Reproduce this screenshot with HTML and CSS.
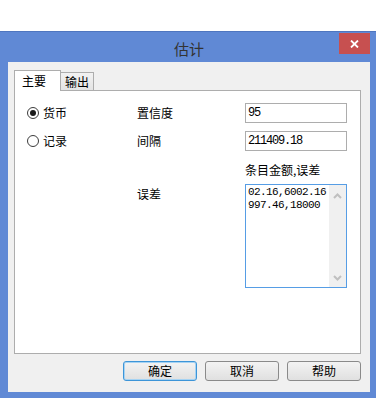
FILE: index.html
```html
<!DOCTYPE html>
<html lang="zh">
<head>
<meta charset="utf-8">
<title>估计</title>
<link rel="stylesheet" href="styles.css">
</head>
<body>
<div class="window">
  <div class="titlebar">
    <span></span>
    <span class="title">估计</span>
    <button class="close" aria-label="关闭">
      <svg width="9" height="8" viewBox="0 0 9 8"><path d="M1 0.5 L8 7.5 M8 0.5 L1 7.5" stroke="#fff" stroke-width="1.8" fill="none"/></svg>
    </button>
  </div>
  <div class="client">
    <div class="tabs">
      <div class="tab active">主要</div>
      <div class="tab">输出</div>
    </div>
    <div class="panel">
      <div class="grid">
        <label class="radio-row r1"><span class="radio checked"></span>货币</label>
        <div class="label r1c2">置信度</div>
        <div class="input r1c3">95</div>

        <label class="radio-row r2"><span class="radio"></span>记录</label>
        <div class="label r2c2">间隔</div>
        <div class="input r2c3">211409.18</div>

        <div class="label sub r3c3">条目金额,误差</div>

        <div class="label err r4c2">误差</div>
        <div class="textarea r4c3">
          <div class="ta-text">
            <div class="ta-line">02.16,6002.16</div>
            <div class="ta-line">997.46,18000</div>
          </div>
          <div class="scroll">
            <svg width="9" height="6" viewBox="0 0 9 6"><path d="M1 5 L4.5 1.5 L8 5" stroke="#c0c0c0" stroke-width="2" fill="none"/></svg>
            <svg width="9" height="6" viewBox="0 0 9 6"><path d="M1 1 L4.5 4.5 L8 1" stroke="#c0c0c0" stroke-width="2" fill="none"/></svg>
          </div>
        </div>
      </div>
    </div>
    <div class="buttons">
      <button class="btn default">确定</button>
      <button class="btn">取消</button>
      <button class="btn">帮助</button>
    </div>
  </div>
</div>
</body>
</html>
```

FILE: styles.css
```css
* { box-sizing: border-box; }
html, body { margin: 0; padding: 0; background: #fff; }
body {
  font-family: "Noto Sans CJK SC", "Noto Sans", sans-serif;
  font-size: 12px;
  color: #000;
  width: 377px;
  height: 398px;
  overflow: hidden;
}
.window {
  margin-top: 31px;
  width: 376px;
  height: 367px;
  background: #6089d5;
  border-top: 1px solid #4f76bf;
  padding: 0 6px 6px 8px;
  display: flex;
  flex-direction: column;
}
.titlebar {
  height: 30px;
  display: grid;
  grid-template-columns: 1fr auto 1fr;
  align-items: start;
}
.title {
  font-size: 15px;
  line-height: 18px;
  color: #333;
  padding-top: 8px;
}
.close {
  justify-self: end;
  width: 31px;
  height: 21px;
  margin-top: 1px;
  border: 0;
  padding: 0;
  background: #c75050;
  display: flex;
  align-items: center;
  justify-content: center;
}
.close svg { display: block; }
.client {
  flex: 1;
  background: #f0f0f0;
  padding: 8px 9px 11px 6px;
  display: flex;
  flex-direction: column;
}
.tabs {
  display: flex;
  align-items: flex-end;
  height: 20px;
}
.tab {
  height: 18px;
  padding: 0 4px;
  line-height: 17px;
  border: 1px solid #adadad;
  border-left: 0;
  border-bottom: 0;
  background: linear-gradient(#f2f2f2, #e4e4e4);
}
.tab.active {
  height: 21px;
  margin-bottom: -1px;
  width: 47px;
  padding: 0 0 0 7px;
  line-height: 19px;
  background: #fff;
  border-left: 1px solid #adadad;
  position: relative;
  z-index: 1;
}
.panel {
  flex: 1;
  background: #fff;
  border: 1px solid #adadad;
}
.grid {
  display: grid;
  grid-template-columns: 110px 108px 102px;
  grid-template-rows: 20px 20px 17px 104px;
  row-gap: 8px;
  padding: 12px 0 0 12px;
}
.r1 { grid-row: 1; grid-column: 1; }
.r1c2 { grid-row: 1; grid-column: 2; }
.r1c3 { grid-row: 1; grid-column: 3; }
.r2 { grid-row: 2; grid-column: 1; }
.r2c2 { grid-row: 2; grid-column: 2; }
.r2c3 { grid-row: 2; grid-column: 3; }
.r3c3 { grid-row: 3; grid-column: 3; }
.r4c2 { grid-row: 4; grid-column: 2; }
.r4c3 { grid-row: 4; grid-column: 3; }
.radio-row {
  display: flex;
  align-items: center;
  gap: 4px;
  line-height: 14px;
}
.radio {
  width: 12px;
  height: 12px;
  border-radius: 50%;
  border: 1px solid #3c3c3c;
  background: #fff;
  display: flex;
  align-items: center;
  justify-content: center;
}
.radio.checked::after {
  content: "";
  width: 6px;
  height: 6px;
  border-radius: 50%;
  background: #1a1a1a;
}
.label {
  line-height: 20px;
}
.label.sub {
  line-height: 12px;
  margin-top: 5px;
}
.label.err {
  line-height: 14px;
  padding-top: 3px;
}
.input {
  border: 1px solid #adadad;
  background: #fff;
  height: 20px;
  padding-left: 2px;
  font-family: "Liberation Mono", "DejaVu Sans Mono", monospace;
  font-size: 12px;
  letter-spacing: -1.2px;
  line-height: 18px;
}
.textarea {
  border: 1px solid #569de5;
  background: #fff;
  display: flex;
}
.ta-text {
  flex: 1;
  padding: 1px 0 0 2px;
  font-family: "Liberation Mono", "DejaVu Sans Mono", monospace;
  font-size: 11px;
  letter-spacing: -0.6px;
}
.ta-line {
  line-height: 13px;
}
.scroll {
  width: 17px;
  background: #f0f0f0;
  display: flex;
  flex-direction: column;
  justify-content: space-between;
  align-items: center;
  padding: 8px 0 6px;
}
.scroll svg { display: block; }
.buttons {
  display: flex;
  justify-content: flex-end;
  gap: 8px;
  margin-top: 7px;
}
.btn {
  width: 74px;
  height: 20px;
  padding: 0;
  font-family: "Noto Sans CJK SC", "Noto Sans", sans-serif;
  font-size: 12px;
  line-height: 16px;
  color: #000;
  border: 1px solid #8a8a8a;
  border-radius: 3px;
  background: linear-gradient(#f3f3f3, #e0e0e0);
}
.btn.default {
  border-color: #3d95d8;
  box-shadow: inset 0 0 0 1px #a6d3f3;
}
```
